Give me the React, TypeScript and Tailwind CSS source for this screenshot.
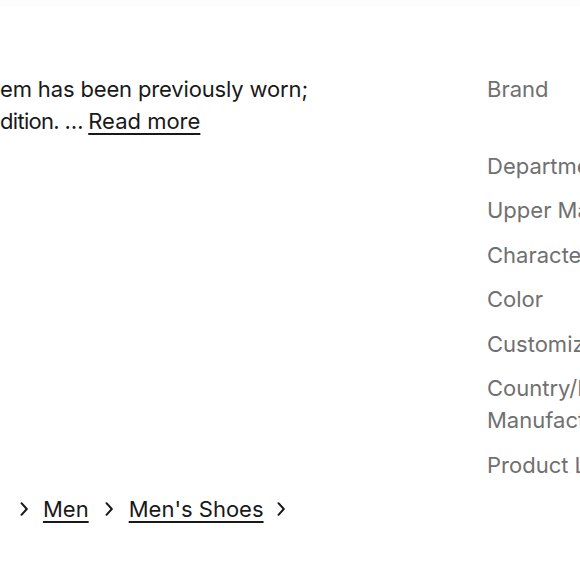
const specs: Array<{ label: string; lines: number }> = [
  { label: 'Brand', lines: 2 },
  { label: 'Department', lines: 1 },
  { label: 'Upper Material', lines: 1 },
  { label: 'Character', lines: 1 },
  { label: 'Color', lines: 1 },
  { label: 'Customized', lines: 1 },
  { label: 'Country/Region of Manufacture', lines: 2 },
  { label: 'Product Line', lines: 1 },
]

function Chevron({ className }: { className?: string }) {
  return (
    <svg width="8" height="14" viewBox="0 0 8 14" fill="none" className={className}>
      <path d="M1.5 1.2 L6.8 7 L1.5 12.8" stroke="#191919" strokeWidth="2" strokeLinecap="round" strokeLinejoin="round" />
    </svg>
  )
}

function Crumb({ children }: { children: React.ReactNode }) {
  return (
    <a href="#" className="underline decoration-[1.5px] underline-offset-[4px] text-[#191919]">
      {children}
    </a>
  )
}

export default function App() {
  return (
    <div
      className="w-[580px] h-[580px] overflow-hidden bg-white text-[#191919]"
      style={{ fontFamily: 'Inter, "Noto Sans", sans-serif' }}
    >
      <div className="h-[6px] bg-[#fcfcfc]" />
      <div className="flex pt-[67px] text-[22px] leading-[32px]">
        {/* Item description */}
        <div className="w-[487px] shrink-0 flex flex-col justify-between h-[452px]">
          <p className="whitespace-nowrap">
            <span className="tracking-[-0.15px]">em has been previously worn;</span>
            <br />
            <span className="tracking-[-0.7px]">dition. … </span>
            <Crumb>Read more</Crumb>
          </p>
          <nav className="flex items-center whitespace-nowrap">
            <Chevron className="ml-[20px] mr-[15px]" />
            <Crumb>Men</Crumb>
            <Chevron className="ml-[16px] mr-[16px]" />
            <Crumb>Men's Shoes</Crumb>
            <Chevron className="ml-[13px]" />
          </nav>
        </div>

        {/* Item specifics */}
        <dl className="flex flex-col gap-[12.5px] shrink-0">
          {specs.map((s) => (
            <div key={s.label} className="flex">
              <dt
                className={
                  s.lines === 2 && s.label !== 'Brand'
                    ? 'w-[215px] text-[#707070]'
                    : 'w-[215px] text-[#707070] whitespace-nowrap'
                }
              >
                {s.label}
              </dt>
              <dd className={s.lines === 2 ? 'h-[64px]' : 'h-[32px]'} />
            </div>
          ))}
        </dl>
      </div>
    </div>
  )
}
